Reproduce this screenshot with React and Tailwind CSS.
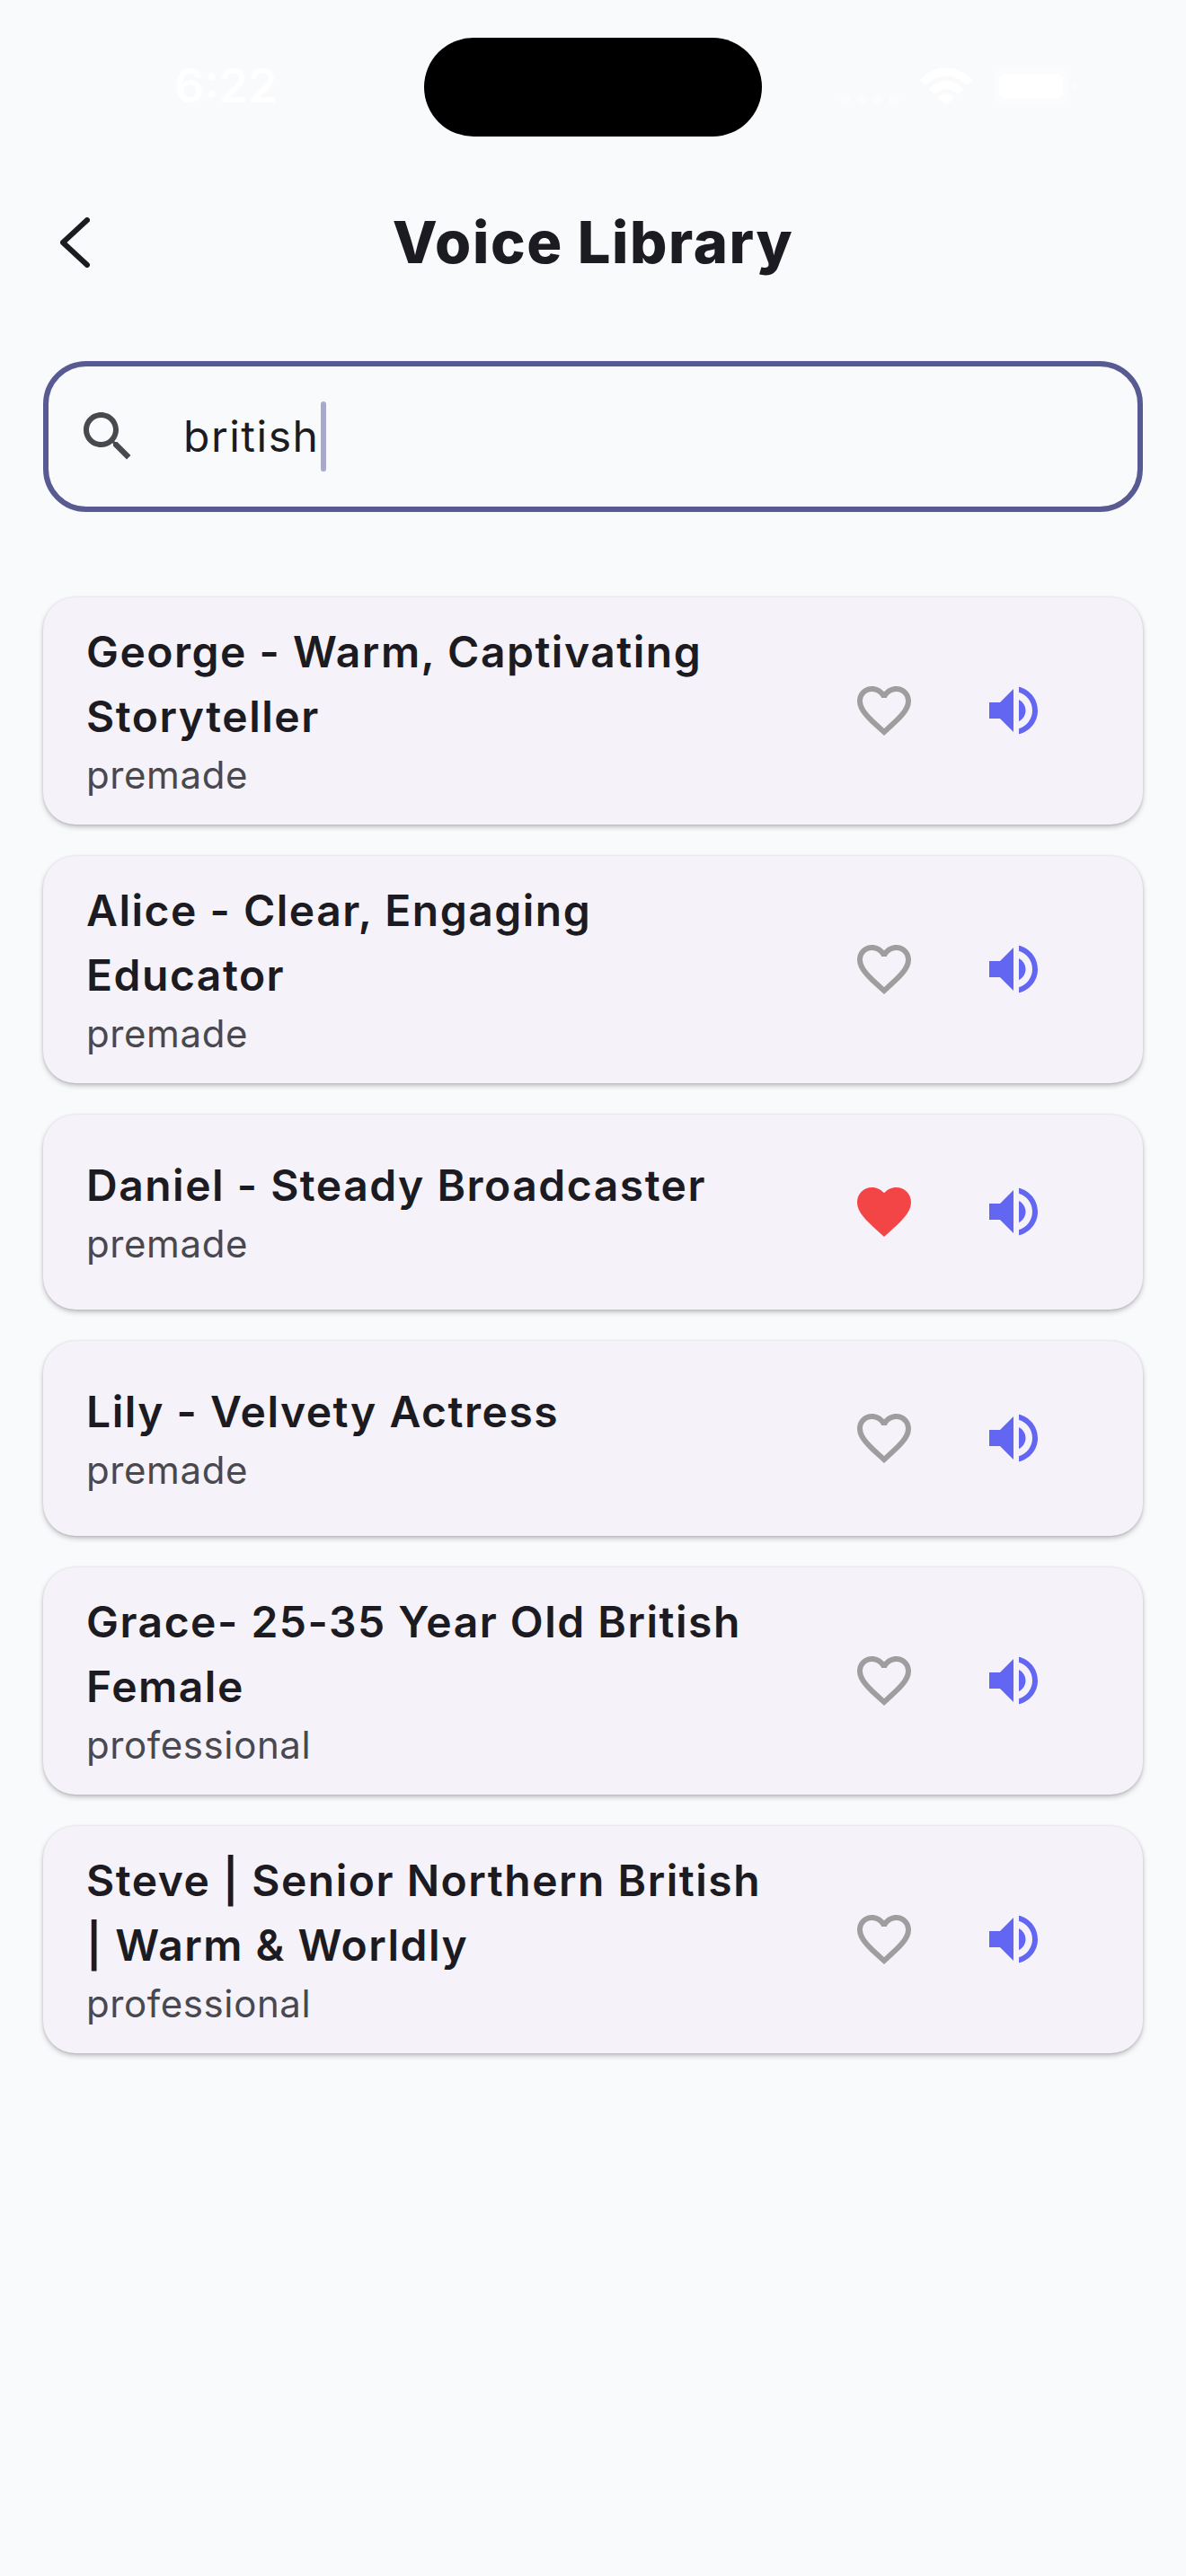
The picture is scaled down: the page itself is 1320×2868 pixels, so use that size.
import React from "react";

const voices = [
  { name: "George - Warm, Captivating Storyteller", type: "premade" },
  { name: "Alice - Clear, Engaging Educator", type: "premade" },
  { name: "Daniel - Steady Broadcaster", type: "premade", liked: true },
  { name: "Lily - Velvety Actress", type: "premade" },
  { name: "Grace- 25-35 Year Old British Female", type: "professional" },
  { name: "Steve | Senior Northern British | Warm & Worldly", type: "professional" },
];

const HeartOutline = () => (
  <svg viewBox="0 0 24 24" className="w-[72px] h-[72px] fill-[#9e9e9e]">
    <path d="M16.5 3c-1.74 0-3.41.81-4.5 2.09C10.91 3.81 9.24 3 7.5 3 4.42 3 2 5.42 2 8.5c0 3.78 3.4 6.86 8.55 11.54L12 21.35l1.45-1.32C18.6 15.36 22 12.28 22 8.5 22 5.42 19.58 3 16.5 3zm-4.4 15.55l-.1.1-.1-.1C7.14 14.24 4 11.39 4 8.5 4 6.5 5.5 5 7.5 5c1.54 0 3.04.99 3.57 2.36h1.87C13.46 5.99 14.96 5 16.5 5c2 0 3.5 1.5 3.5 3.5 0 2.89-3.14 5.74-7.9 10.05z" />
  </svg>
);

const HeartFilled = () => (
  <svg viewBox="0 0 24 24" className="w-[72px] h-[72px] fill-[#f44546]">
    <path d="M12 21.35l-1.45-1.32C5.4 15.36 2 12.28 2 8.5 2 5.42 4.42 3 7.5 3c1.74 0 3.41.81 4.5 2.09C13.09 3.81 14.76 3 16.5 3 19.58 3 22 5.42 22 8.5c0 3.78-3.4 6.86-8.55 11.54L12 21.35z" />
  </svg>
);

const Speaker = () => (
  <svg viewBox="0 0 24 24" className="w-[72px] h-[72px] fill-[#6366f1]">
    <path d="M3 9v6h4l5 5V4L7 9H3zm13.5 3c0-1.77-1.02-3.29-2.5-4.03v8.05c1.48-.73 2.5-2.25 2.5-4.02zM14 3.23v2.06c2.89.86 5 3.54 5 6.71s-2.11 5.85-5 6.71v2.06c4.01-.91 7-4.49 7-8.77s-2.99-7.86-7-8.77z" />
  </svg>
);

const StatusBar = () => (
  <div className="relative h-[198px] flex items-start justify-between pt-[70px] pl-[194px] pr-[122px]">
    <span className="text-[52px] leading-[52px] font-semibold text-white">6:22</span>
    <div className="absolute left-[472px] top-[42px] w-[376px] h-[110px] rounded-[55px] bg-black" />
    <div className="mt-[5px] flex items-end gap-[23px] h-[42px]">
      <div className="flex gap-[6px]">
        <div className="w-[12px] h-[12px] rounded-full bg-[#fbfcfd]" />
        <div className="w-[12px] h-[12px] rounded-full bg-[#fbfcfd]" />
        <div className="w-[12px] h-[12px] rounded-full bg-[#fbfcfd]" />
        <div className="w-[12px] h-[12px] rounded-full bg-[#fbfcfd]" />
      </div>
      <svg viewBox="0 0 58 42" className="w-[58px] h-[42px] fill-white">
        <path d="M0 14 C16 -4 42 -4 58 14 L52 20 C38 6 20 6 6 20 Z" />
        <path d="M10 24 C20 12 38 12 48 24 L42 30 C34 22 24 22 16 30 Z" />
        <path d="M20 34 C25 28 33 28 38 34 L29 42 Z" />
      </svg>
      <div className="flex items-center gap-[4px]">
        <div className="w-[85px] h-[42px] rounded-[14px] border-[7px] border-[#fbfcfd] bg-white" />
        <div className="w-[4px] h-[12px] rounded-full bg-[#fbfcfd]" />
      </div>
    </div>
  </div>
);

const VoiceCard = ({ voice }) => (
  <div className="min-h-[217px] flex items-center pl-[48px] pr-[72px] pt-[25px] pb-[27px] rounded-[36px] bg-[#f5f2f9] shadow-[0_3px_6px_-1px_rgba(0,0,0,0.3),0_0_3px_rgba(0,0,0,0.1)]">
    <div className="w-[768px]">
      <div className="text-[48px] leading-[72px] font-semibold tracking-[1.5px] text-[#1c1b21]">{voice.name}</div>
      <div className="text-[42px] leading-[57px] tracking-[0.6px] text-[#49484f]">{voice.type}</div>
    </div>
    <div className="ml-auto flex items-center">
      <div className="w-[144px] flex justify-center">{voice.liked ? <HeartFilled /> : <HeartOutline />}</div>
      <div className="w-[144px] flex justify-center"><Speaker /></div>
    </div>
  </div>
);

export default function App() {
  return (
    <div className="w-full min-h-[2868px] bg-[#f9fafc] font-['Inter',sans-serif]">
      <StatusBar />

      <div className="relative h-[144px] flex items-center justify-center">
        <svg viewBox="0 0 33 56" className="absolute left-[67px] top-[44px] w-[33px] h-[56px] fill-none stroke-[#1c1b21] stroke-[6] [stroke-linecap:round] [stroke-linejoin:round]">
          <polyline points="30,3 3,28 30,53" />
        </svg>
        <h1 className="text-[65px] leading-[72px] font-extrabold tracking-[1.6px] text-[#1c1b21]">Voice Library</h1>
      </div>

      <div className="mx-[48px] mt-[60px] h-[168px] flex items-center pl-[30px] rounded-[48px] border-[6px] border-[#585a92]">
        <svg viewBox="0 0 24 24" className="w-[72px] h-[72px] fill-[#49484f]">
          <path d="M15.5 14h-.79l-.28-.27C15.41 12.59 16 11.11 16 9.5 16 5.91 13.09 3 9.5 3S3 5.91 3 9.5 5.91 16 9.5 16c1.61 0 3.09-.59 4.23-1.57l.27.28v.79l5 4.99L20.49 19l-4.99-5zm-6 0C7.01 14 5 11.99 5 9.5S7.01 5 9.5 5 14 7.01 14 9.5 11.99 14 9.5 14z" />
        </svg>
        <span className="ml-[48px] text-[48px] leading-[72px] tracking-[1.5px] text-[#1c1b21]">british</span>
        <div className="ml-[2px] w-[6px] h-[78px] rounded-full bg-[#a9a9cb]" />
      </div>

      <div className="mx-[48px] mt-[95px] flex flex-col gap-[35px]">
        {voices.map((v) => (
          <VoiceCard key={v.name} voice={v} />
        ))}
      </div>
    </div>
  );
}
